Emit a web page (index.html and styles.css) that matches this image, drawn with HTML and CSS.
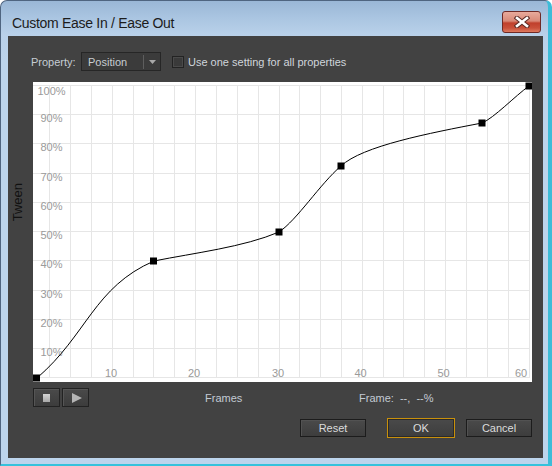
FILE: index.html
```html
<!DOCTYPE html>
<html>
<head>
<meta charset="utf-8">
<link rel="stylesheet" href="styles.css">
</head>
<body>
<div class="window">
  <div class="titlebar">
    <div class="title">Custom Ease In / Ease Out</div>
    <div class="close">
      <svg width="16" height="12" viewBox="-8 -6 16 12">
        <path d="M-5 -4L5 4M5 -4L-5 4" stroke="#5a2a24" stroke-width="4.6" stroke-linecap="square"/>
        <path d="M-5 -4L5 4M5 -4L-5 4" stroke="#ffffff" stroke-width="2.6" stroke-linecap="square"/>
      </svg>
    </div>
  </div>
  <div class="panel">
    <div class="prop-row">
      <span class="prop-label">Property:</span>
      <div class="select">
        <span class="select-text">Position</span>
        <span class="select-sep"></span>
        <span class="select-arrow"><svg width="7" height="4"><path d="M0 0H7L3.5 4Z" fill="#a8a8a8"/></svg></span>
      </div>
      <span class="checkbox"></span>
      <span class="check-label">Use one setting for all properties</span>
    </div>
    <div class="graph-row">
      <div class="axis-label"><span class="axis-text">Tween</span></div>
      <svg class="graph" width="499" height="300" viewBox="33 82 499 300">
        <path class="grid" d="M33 85.5H530M33 114.5H530M33 143.5H530M33 173.5H530M33 202.5H530M33 231.5H530M33 260.5H530M33 290.5H530M33 319.5H530M33 348.5H530M33 377.5H530
        M49.5 85V378M70.5 85V378M91.5 85V378M112.5 85V378M133.5 85V378M153.5 85V378M174.5 85V378M195.5 85V378M216.5 85V378M237.5 85V378M258.5 85V378M279.5 85V378M299.5 85V378M320.5 85V378M341.5 85V378M362.5 85V378M383.5 85V378M403.5 85V378M424.5 85V378M445.5 85V378M466.5 85V378M487.5 85V378M508.5 85V378M529.5 85V378"/>
        <g class="pct">
          <text x="51.5" y="95">100%</text>
          <text x="51.5" y="122">90%</text>
          <text x="51.5" y="151">80%</text>
          <text x="51.5" y="181">70%</text>
          <text x="51.5" y="210">60%</text>
          <text x="51.5" y="239">50%</text>
          <text x="51.5" y="268">40%</text>
          <text x="51.5" y="298">30%</text>
          <text x="51.5" y="327">20%</text>
          <text x="51.5" y="356">10%</text>
        </g>
        <g class="frm">
          <text x="111" y="377">10</text>
          <text x="194" y="377">20</text>
          <text x="278" y="377">30</text>
          <text x="360.5" y="377">40</text>
          <text x="443.5" y="377">50</text>
          <text x="521" y="377">60</text>
        </g>
        <path class="curve" d="M37 378C87 335 94 287 154 261C194 253 244 247 279 232C297 220 320 184 341 166C362 146 430 133 482 123C494 118 515 96 529 86"/>
        <g class="keys">
          <rect x="33" y="374.5" width="7" height="7"/>
          <rect x="150" y="257.5" width="7" height="7"/>
          <rect x="275.5" y="228.5" width="7" height="7"/>
          <rect x="337.5" y="162.5" width="7" height="7"/>
          <rect x="478.5" y="119.5" width="7" height="7"/>
          <rect x="525.5" y="82.5" width="7" height="7"/>
        </g>
      </svg>
    </div>
    <div class="controls-row">
      <button class="tool-btn"><span class="stop-icon"></span></button>
      <button class="tool-btn"><svg width="10" height="10"><path d="M0 0L10 5L0 10Z" fill="#b4b4b4"/></svg></button>
      <span class="frames-label">Frames</span>
      <span class="frame-info">Frame:  --,  --%</span>
    </div>
    <div class="buttons-row">
      <button class="btn">Reset</button>
      <button class="btn btn-ok">OK</button>
      <button class="btn btn-cancel">Cancel</button>
    </div>
  </div>
</div>
</body>
</html>
```
FILE: styles.css
```css
html, body {
  margin: 0;
  padding: 0;
  background: #ffffff;
}
body {
  font-family: "Liberation Sans", Arial, sans-serif;
  font-size: 11px;
}
.window {
  width: 552px;
  height: 466px;
  box-sizing: border-box;
  display: flex;
  flex-direction: column;
  border-top: 1px solid #4f6580;
  border-left: 1px solid #4f6580;
  border-right: 4px solid #3dbcd8;
  border-bottom: 2px solid #35c2dc;
  border-radius: 7px 7px 0 0;
  background: linear-gradient(to bottom, #9ab7d6 0, #abc6e2 18px, #b9d1ea 34px, #bcd4ec 60px, #bcd4ec 100%);
}
.titlebar {
  height: 35px;
  display: flex;
  justify-content: space-between;
  align-items: flex-start;
}
.title {
  padding-top: 14px;
  padding-left: 11px;
  font-size: 14px;
  line-height: 16px;
  letter-spacing: -0.3px;
  color: #1c1c1c;
}
.close {
  margin-top: 10px;
  margin-right: 7px;
  width: 39px;
  height: 22px;
  box-sizing: border-box;
  border: 1px solid #6e2a26;
  border-radius: 3px;
  background: linear-gradient(to bottom, #e8aa9c 0, #d98a78 45%, #c0402c 55%, #c9503a 80%, #de7a60 100%);
  display: flex;
  align-items: center;
  justify-content: center;
}
.close svg {
  display: block;
}
.panel {
  margin: 0 5px 0 7px;
  height: 422px;
  background: #424242;
  display: flex;
  flex-direction: column;
}
.prop-row {
  margin-top: 16px;
  height: 19px;
  padding-left: 23px;
  display: flex;
  align-items: center;
  color: #c6ccd3;
}
.prop-label {
  width: 50px;
}
.select {
  width: 80px;
  height: 19px;
  box-sizing: border-box;
  border: 1px solid #262626;
  background: #3b3b3b;
  display: flex;
  align-items: center;
  padding-left: 6px;
  color: #c8ccd1;
}
.select-text {
  flex: 1;
}
.select-sep {
  width: 1px;
  height: 14px;
  background: #5e5e5e;
}
.select-arrow {
  width: 16px;
  display: flex;
  justify-content: center;
  align-items: center;
}
.select-arrow svg {
  display: block;
}
.checkbox {
  margin-left: 11px;
  width: 12px;
  height: 12px;
  box-sizing: border-box;
  border: 1px solid #232323;
  background: #3a3a3a;
  box-shadow: inset 0 0 0 1px #4a4a4a;
}
.check-label {
  margin-left: 4px;
  color: #d0d5db;
}
.graph-row {
  margin-top: 11px;
  display: flex;
}
.axis-label {
  width: 25px;
  padding-top: 101px;
  padding-left: 3px;
  box-sizing: border-box;
}
.axis-text {
  display: block;
  writing-mode: vertical-rl;
  transform: rotate(180deg);
  font-size: 13px;
  line-height: 14px;
  color: #111111;
}
.graph {
  display: block;
  background: #ffffff;
}
.grid {
  stroke: #e6e6e6;
  stroke-width: 1;
  fill: none;
}
.pct text {
  font-family: "Liberation Sans", Arial, sans-serif;
  font-size: 11px;
  fill: #9a9a9a;
  text-anchor: middle;
}
.frm text {
  font-family: "Liberation Sans", Arial, sans-serif;
  font-size: 11px;
  fill: #9a9a9a;
  text-anchor: middle;
}
.curve {
  stroke: #000000;
  stroke-width: 1;
  fill: none;
}
.keys rect {
  fill: #000000;
}
.controls-row {
  margin-top: 6px;
  height: 19px;
  padding-left: 25px;
  display: flex;
  align-items: center;
  color: #c2cad4;
}
.tool-btn {
  width: 27px;
  height: 19px;
  margin: 0 2px 0 0;
  padding: 0;
  box-sizing: border-box;
  border: 1px solid #222222;
  background: linear-gradient(to bottom, #4a4a4a, #3c3c3c);
  box-shadow: inset 1px 1px 0 #555555;
  display: flex;
  align-items: center;
  justify-content: center;
}
.tool-btn svg {
  display: block;
  margin-left: 2px;
}
.stop-icon {
  width: 7px;
  height: 8px;
  background: linear-gradient(to bottom, #d4d4d4, #a8a8a8);
}
.frames-label {
  margin-left: 114px;
  width: 154px;
}
.frame-info {
  white-space: pre;
}
.buttons-row {
  margin-top: 11px;
  height: 20px;
  padding-right: 11px;
  display: flex;
  justify-content: flex-end;
  align-items: center;
}
.btn {
  width: 66px;
  height: 18px;
  padding: 0;
  margin: 0;
  box-sizing: border-box;
  border: 1px solid #1c1c1c;
  background: linear-gradient(to bottom, #4a4a4a, #3d3d3d);
  box-shadow: inset 1px 1px 0 #525252;
  font-family: "Liberation Sans", Arial, sans-serif;
  font-size: 11px;
  color: #dcdcdc;
  line-height: 16px;
}
.btn-ok {
  width: 68px;
  height: 20px;
  margin-left: 21px;
  border: 1px solid #c8900c;
  box-shadow: inset 0 0 0 1px #2a2a2a;
}
.btn-cancel {
  margin-left: 11px;
}
```
